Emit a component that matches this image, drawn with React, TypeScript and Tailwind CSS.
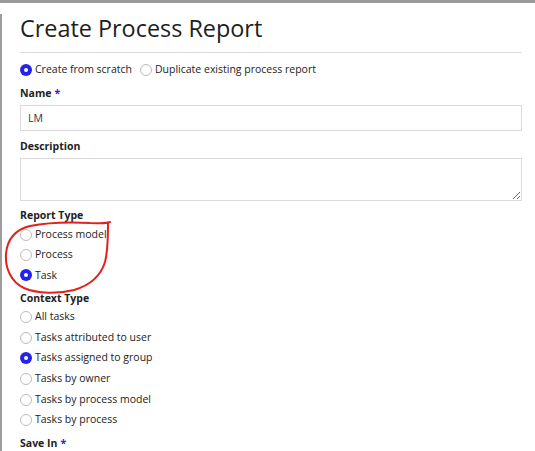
import React from "react";

const BLUE = "#2322f0";

function Radio({ checked, label }: { checked?: boolean; label: string }) {
  return (
    <label className="flex items-center gap-[3px] h-full">
      {checked ? (
        <span className="w-[12px] h-[12px] rounded-full bg-[#2322f0] flex items-center justify-center shrink-0">
          <span className="w-[4px] h-[4px] rounded-full bg-white" />
        </span>
      ) : (
        <span className="w-[12px] h-[12px] rounded-full border border-[#bdbdbd] bg-white shrink-0" />
      )}
      <span className="text-[10.5px] text-[#222]">{label}</span>
    </label>
  );
}

function Label({ text, required, className }: { text: string; required?: boolean; className?: string }) {
  return (
    <div className={`h-[16px] leading-[16px] text-[10.5px] font-bold text-[#222] ${className ?? ""}`}>
      {text}
      {required && <span className="ml-[3px]" style={{ color: BLUE }}>*</span>}
    </div>
  );
}

const REPORT_TYPES = [
  { label: "Process model" },
  { label: "Process" },
  { label: "Task", checked: true },
];

const CONTEXT_TYPES = [
  { label: "All tasks" },
  { label: "Tasks attributed to user" },
  { label: "Tasks assigned to group", checked: true },
  { label: "Tasks by owner" },
  { label: "Tasks by process model" },
  { label: "Tasks by process" },
];

export default function App() {
  return (
    <div
      className="relative w-[535px] h-[451px] overflow-hidden bg-white"
      style={{ fontFamily: '"Open Sans", "Liberation Sans", sans-serif' }}
    >
      <div className="h-[3px] bg-[#9a9a9a]" />
      <div className="h-[448px] border-l-2 border-[#9d9d9d] pl-[18px] pr-[13px]">
        <h1 className="mt-[11px] h-[28px] leading-[28px] text-[23.4px] text-[#1e1e1e] font-normal">
          Create Process Report
        </h1>
        <div className="mt-[10px] h-px bg-[#dcdcdc]" />

        <div className="mt-[7px] h-[20px] flex items-center">
          <Radio checked label="Create from scratch" />
          <span className="ml-[8px] h-full">
            <Radio label="Duplicate existing process report" />
          </span>
        </div>

        <Label text="Name" required className="mt-[5px]" />
        <input
          readOnly
          value="LM"
          className="mt-[4px] block w-full h-[26px] border border-[#dadada] px-[7px] text-[10.5px] text-[#333] outline-none"
        />

        <Label text="Description" className="mt-[7px]" />
        <textarea
          readOnly
          className="mt-[4px] block w-full h-[43px] border border-[#dadada] resize-y outline-none"
        />

        <Label text="Report Type" className="mt-[6px]" />
        <div className="mt-[1.5px] flex flex-col">
          {REPORT_TYPES.map((r) => (
            <div key={r.label} className="h-[20.4px]">
              <Radio label={r.label} checked={r.checked} />
            </div>
          ))}
        </div>

        <Label text="Context Type" className="mt-[4px]" />
        <div className="mt-[1px] flex flex-col">
          {CONTEXT_TYPES.map((r) => (
            <div key={r.label} className="h-[20.65px]">
              <Radio label={r.label} checked={r.checked} />
            </div>
          ))}
        </div>

        <Label text="Save In" required className="mt-[4px]" />
      </div>

      <svg
        className="absolute top-0 left-0 pointer-events-none"
        width="535"
        height="451"
        viewBox="0 0 535 451"
        fill="none"
      >
        <path
          d="M110,222 C105,224 100,223 90,223 C70,222 45,223 30,226 C14,230 7,241 6,254 C5,268 11,282 24,288 C38,294 58,294 74,290 C91,285 101,275 105,262 C108,250 108,236 108,224"
          stroke="#e3201c"
          strokeWidth="2"
          strokeLinecap="round"
          strokeLinejoin="round"
        />
      </svg>
    </div>
  );
}
